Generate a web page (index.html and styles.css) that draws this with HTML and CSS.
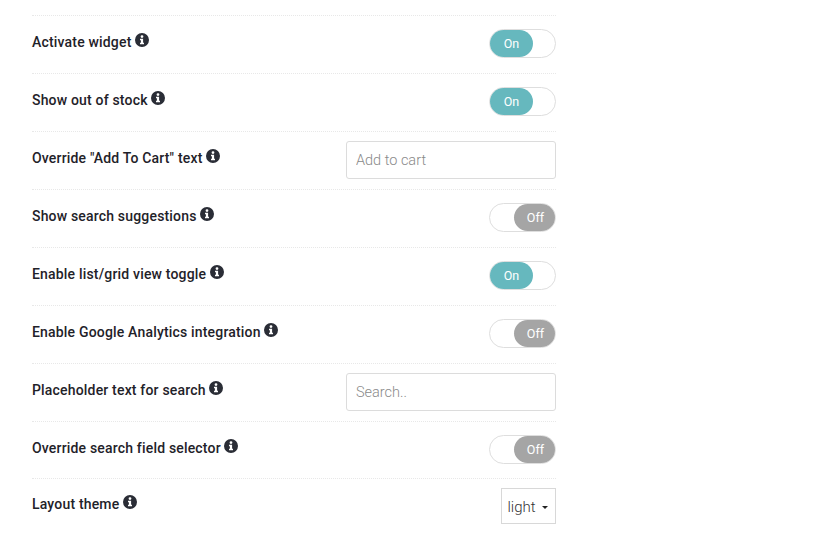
FILE: index.html
```html
<!DOCTYPE html>
<html lang="en">
<head>
<meta charset="utf-8">
<title>Widget settings</title>
<link rel="stylesheet" href="styles.css">
</head>
<body>
<svg class="defs" width="0" height="0" aria-hidden="true">
  <symbol id="info" viewBox="0 0 14 14">
    <path fill-rule="evenodd" d="M7 0a7 7 0 1 1 0 14A7 7 0 0 1 7 0ZM7 2.2a1.4 1.4 0 1 0 0 2.8 1.4 1.4 0 0 0 0-2.8ZM5 5.8v1.5h.9v2.5H5v1.5h4V9.8h-.9V5.8Z"/>
  </symbol>
</svg>
<main class="settings">
  <div class="row">
    <span class="label">Activate widget <svg class="info"><use href="#info"/></svg></span>
    <span class="toggle on"><span class="knob">On</span></span>
  </div>
  <div class="row">
    <span class="label">Show out of stock <svg class="info"><use href="#info"/></svg></span>
    <span class="toggle on"><span class="knob">On</span></span>
  </div>
  <div class="row">
    <span class="label">Override "Add To Cart" text <svg class="info"><use href="#info"/></svg></span>
    <input class="field" type="text" placeholder="Add to cart">
  </div>
  <div class="row">
    <span class="label">Show search suggestions <svg class="info"><use href="#info"/></svg></span>
    <span class="toggle off"><span class="knob">Off</span></span>
  </div>
  <div class="row">
    <span class="label">Enable list/grid view toggle <svg class="info"><use href="#info"/></svg></span>
    <span class="toggle on"><span class="knob">On</span></span>
  </div>
  <div class="row">
    <span class="label">Enable Google Analytics integration <svg class="info"><use href="#info"/></svg></span>
    <span class="toggle off"><span class="knob">Off</span></span>
  </div>
  <div class="row">
    <span class="label">Placeholder text for search <svg class="info"><use href="#info"/></svg></span>
    <input class="field" type="text" placeholder="Search..">
  </div>
  <div class="row short">
    <span class="label">Override search field selector <svg class="info"><use href="#info"/></svg></span>
    <span class="toggle off"><span class="knob">Off</span></span>
  </div>
  <div class="row last">
    <span class="label">Layout theme <svg class="info"><use href="#info"/></svg></span>
    <button class="select" type="button">light <span class="caret"></span></button>
  </div>
</main>
</body>
</html>
```
FILE: styles.css
```css
* { box-sizing: border-box; }
html, body { margin: 0; background: #fff; }
body { font-family: Roboto, "Liberation Sans", sans-serif; color: #1f2229; overflow: hidden; height: 555px; }
.defs { position: absolute; }
.settings { width: 524px; margin: 15px 0 0 32px; }
.row {
  display: flex;
  align-items: center;
  justify-content: space-between;
  height: 58px;
  padding-bottom: 2px;
  border-top: 1px dotted #e8e8e8;
}
.row.short { height: 57px; padding-bottom: 1px; }
.row.last { height: 57px; }
.label { font-size: 14px; font-weight: 500; line-height: 20px; margin-top: -4px; letter-spacing: .18px; }
.info { width: 14px; height: 14px; fill: #2a2d36; vertical-align: 0; }
.toggle {
  display: flex;
  width: 67px;
  height: 29px;
  border: 1px solid #dedede;
  border-radius: 15px;
  background: #fff;
  font-size: 12.5px;
  color: #fff;
}
.toggle.off { justify-content: flex-end; }
.knob {
  display: flex;
  align-items: center;
  justify-content: center;
  width: 43px;
  height: 27px;
  border-radius: 14px;
}
.on .knob { background: #66b8be; }
.off .knob { width: 41px; padding-left: 2px; background: #a5a5a5; }
.field {
  width: 210px;
  height: 38px;
  padding: 2px 9px 0;
  border: 1px solid #dcdcdc;
  border-radius: 3px;
  font: 300 14.5px Roboto, sans-serif;
  outline: none;
}
.field::placeholder { color: #8a8a8a; opacity: 1; }
.select {
  width: 55px;
  height: 36px;
  padding: 2px 2px 0 0;
  background: #fff;
  border: 1px solid #d8d8d8;
  font: 300 15px Roboto, sans-serif;
  color: #333;
  display: flex;
  align-items: center;
  justify-content: center;
  gap: 6px;
}
.caret {
  width: 0;
  height: 0;
  border-top: 3.5px solid #222;
  border-left: 3.5px solid transparent;
  border-right: 3.5px solid transparent;
}
```
